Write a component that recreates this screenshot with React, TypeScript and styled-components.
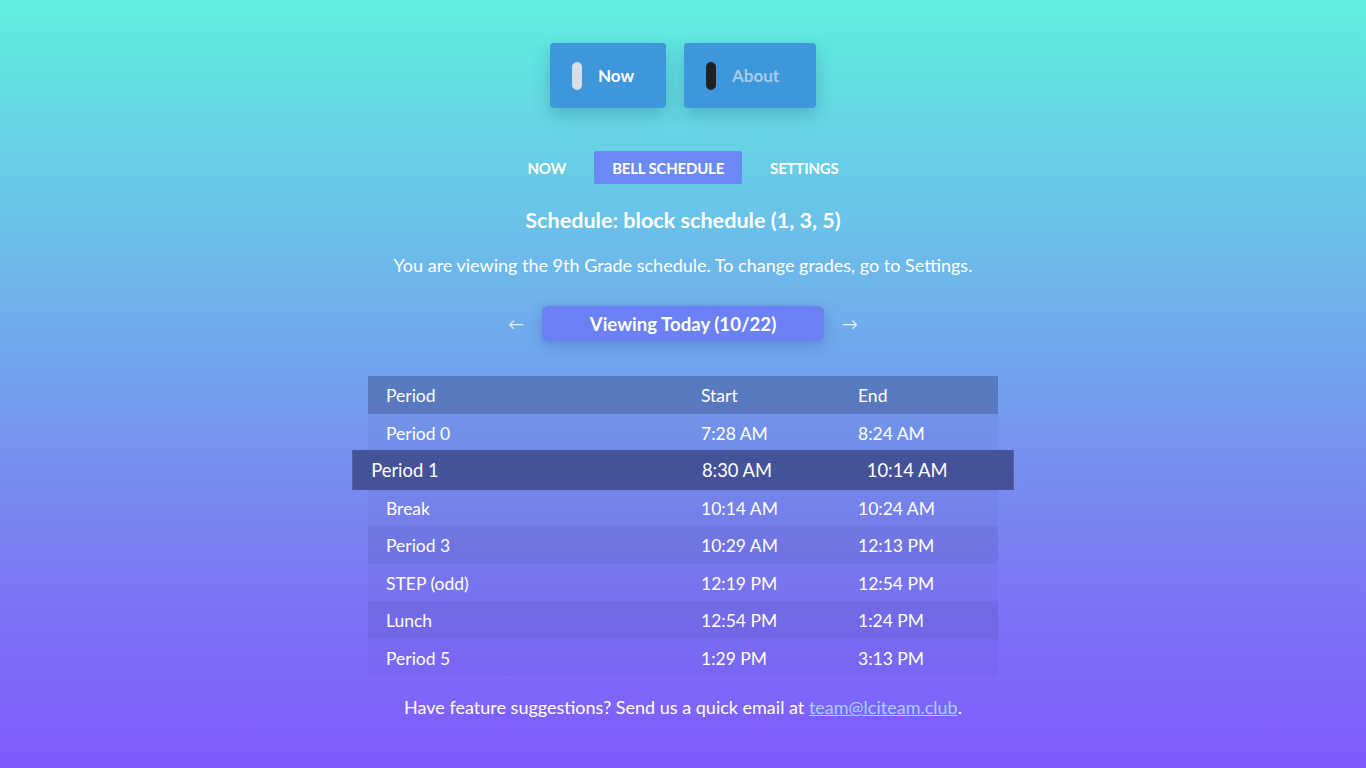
import React from "react";
import styled, { createGlobalStyle } from "styled-components";

const Global = createGlobalStyle`
  html, body { margin: 0; padding: 0; }
  body {
    min-height: 768px;
    background: linear-gradient(180deg, #5ff0df 0%, #6fb0ec 40%, #7a80f2 70%, #8059ff 100%);
    font-family: Lato, "Open Sans", sans-serif;
    color: #fff;
  }
`;

const Page = styled.div`
  display: flex;
  flex-direction: column;
  align-items: center;
  padding-top: 43px;
  min-height: 768px;
  box-sizing: border-box;
`;

const TopBar = styled.div`
  display: flex;
  gap: 18px;
`;

const TopButton = styled.button<{ $w: number; $active?: boolean }>`
  width: ${(p) => p.$w}px;
  height: 65px;
  border: none;
  border-radius: 4px;
  background: #3e97db;
  box-shadow: 0 6px 18px rgba(30, 80, 120, 0.3);
  display: flex;
  align-items: center;
  padding: 0 0 0 22px;
  gap: 16px;
  font-family: Lato, sans-serif;
  font-weight: 700;
  font-size: 17px;
  color: ${(p) => (p.$active ? "#fff" : "#a9ccec")};
`;

const Pill = styled.span<{ $dark?: boolean }>`
  width: 10px;
  height: 28px;
  border-radius: 5px;
  background: ${(p) => (p.$dark ? "#222" : "#d8dee6")};
`;

const Tabs = styled.nav`
  display: flex;
  gap: 28px;
  margin-top: 43px;
  align-items: center;
`;

const Tab = styled.div<{ $active?: boolean }>`
  height: 33px;
  display: flex;
  align-items: center;
  padding: 0 ${(p) => (p.$active ? "18px" : "0")};
  background: ${(p) => (p.$active ? "#6c8af5" : "transparent")};
  border-radius: 2px;
  font-weight: 700;
  font-size: 15px;
  letter-spacing: -0.2px;
  text-transform: uppercase;
`;

const Title = styled.h2`
  margin: 20px 0 0;
  font-size: 21.6px;
  font-weight: 700;
  line-height: 32px;
`;

const Note = styled.p`
  margin: 17px 0 0;
  font-size: 18px;
  line-height: 24px;
`;

const DayNav = styled.div`
  display: flex;
  align-items: center;
  gap: 18px;
  margin-top: 29px;
`;

const Arrow = styled.span`
  font-size: 16px;
  color: #e6f0ff;
`;

const ViewBtn = styled.div`
  width: 282px;
  height: 35px;
  border-radius: 6px;
  background: #6c80f5;
  box-shadow: 0 4px 14px rgba(40, 60, 140, 0.3);
  display: flex;
  align-items: center;
  justify-content: center;
  font-weight: 700;
  font-size: 18.6px;
`;

const Table = styled.div`
  margin-top: 35px;
  width: 630px;
  display: flex;
  flex-direction: column;
`;

const Row = styled.div<{ $bg: string; $current?: boolean }>`
  display: grid;
  grid-template-columns: 315px 157px 158px;
  height: 37.5px;
  align-items: center;
  background: ${(p) => p.$bg};
  font-size: 17.5px;
  transform: ${(p) => (p.$current ? "scale(1.05)" : "none")};
  position: relative;
  z-index: ${(p) => (p.$current ? 1 : 0)};
`;

const Cell = styled.div`
  padding: 2px 0 0 18px;
`;

const Footer = styled.p`
  margin: 20px 0 0;
  font-size: 18px;
`;

const Mail = styled.a`
  color: #a4d2ff;
  text-decoration: underline;
`;

const rows: [string, string, string][] = [
  ["Period 0", "7:28 AM", "8:24 AM"],
  ["Period 1", "8:30 AM", "10:14 AM"],
  ["Break", "10:14 AM", "10:24 AM"],
  ["Period 3", "10:29 AM", "12:13 PM"],
  ["STEP (odd)", "12:19 PM", "12:54 PM"],
  ["Lunch", "12:54 PM", "1:24 PM"],
  ["Period 5", "1:29 PM", "3:13 PM"],
];

export default function App() {
  return (
    <>
      <Global />
      <Page>
        <TopBar>
          <TopButton $w={116} $active>
            <Pill />
            Now
          </TopButton>
          <TopButton $w={132}>
            <Pill $dark />
            About
          </TopButton>
        </TopBar>
        <Tabs>
          <Tab>Now</Tab>
          <Tab $active>Bell Schedule</Tab>
          <Tab>Settings</Tab>
        </Tabs>
        <Title>Schedule: block schedule (1, 3, 5)</Title>
        <Note>You are viewing the 9th Grade schedule. To change grades, go to Settings.</Note>
        <DayNav>
          <Arrow>←</Arrow>
          <ViewBtn>Viewing Today (10/22)</ViewBtn>
          <Arrow>→</Arrow>
        </DayNav>
        <Table>
          <Row $bg="rgba(10, 20, 60, 0.26)">
            <Cell>Period</Cell>
            <Cell>Start</Cell>
            <Cell>End</Cell>
          </Row>
          {rows.map((r, i) => {
            const current = i === 1;
            const bg = current
              ? "rgba(0, 0, 30, 0.42)"
              : i % 2 === 0
              ? "rgba(0, 0, 20, 0.03)"
              : "rgba(0, 0, 40, 0.08)";
            return (
              <Row key={r[0]} $bg={bg} $current={current}>
                <Cell>{r[0]}</Cell>
                <Cell>{r[1]}</Cell>
                <Cell>{r[2]}</Cell>
              </Row>
            );
          })}
        </Table>
        <Footer>
          Have feature suggestions? Send us a quick email at{" "}
          <Mail href="#">team@lciteam.club</Mail>.
        </Footer>
      </Page>
    </>
  );
}
